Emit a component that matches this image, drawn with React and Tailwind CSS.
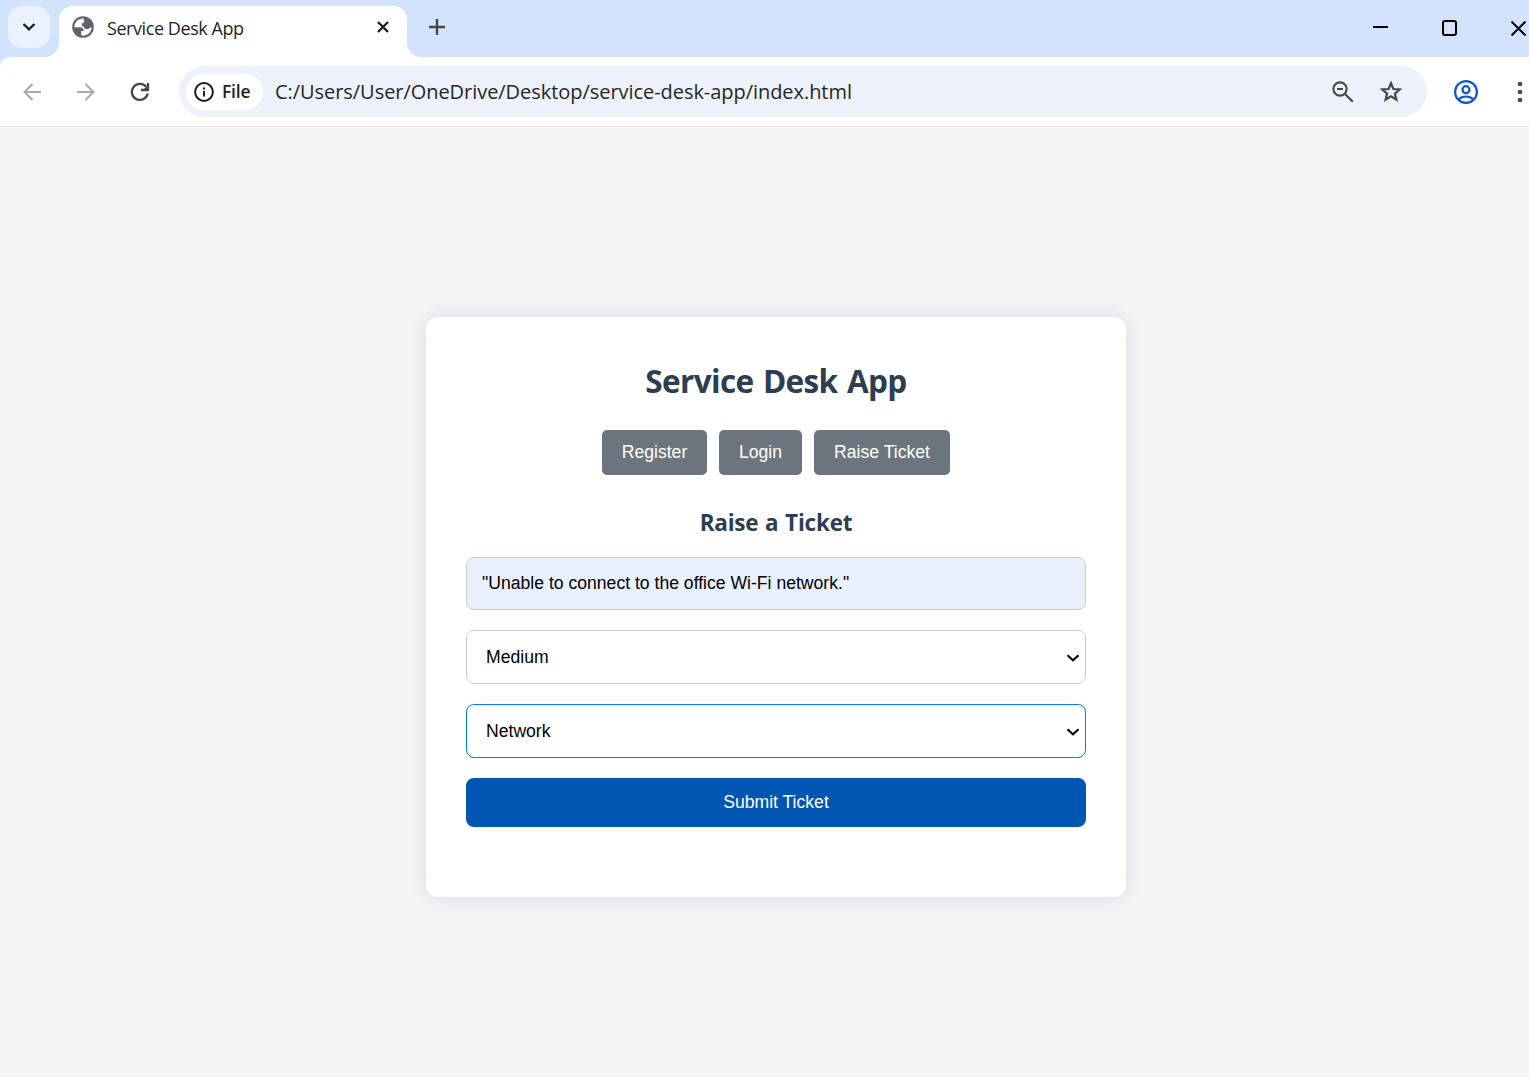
function Glyph({ w, h, children, className = "" }) {
  return (
    <svg width={w} height={h} viewBox={`0 0 ${w} ${h}`} fill="none" className={`shrink-0 ${className}`}>
      {children}
    </svg>
  );
}

function TabStrip() {
  return (
    <div className="flex h-[57px] bg-[#d3e3fd]">
      <button className="ml-2 mt-[6px] flex h-[42px] w-[42px] items-center justify-center rounded-[14px] bg-[#ebf1fe]">
        <Glyph w={14} h={10}>
          <path d="M1.5 2 7 7.3 12.500 2" stroke="#1f1f1f" strokeWidth="2.4" />
        </Glyph>
      </button>
      <Glyph w={14} h={14} className="-ml-[5px] self-end">
        <path d="M14 0V14H0A14 14 0 0 0 14 0Z" fill="#fff" />
      </Glyph>
      <div className="mt-[6px] flex h-[51px] w-[348px] rounded-t-[14px] bg-white pl-[13px] pr-[18px]">
        <Glyph w={22} h={22} className="mt-[10px]">
          <circle cx="11" cy="11" r="10.800" fill="#5f6368" />
          <path d="M11.800 2.600C10 2 6.500 3 4.500 5.200 3 7 2.200 9.500 2.400 11.200H7.600C9.800 11.200 11 12 11.600 13.600L11.800 15H9.200V19.300C14 20.500 19.200 17 19.600 11.400 18.500 11 17.600 12.900 16 12.900H14C12.600 12.900 12 12 12 10.800 10.600 10.800 9.800 10.200 9.800 8.800 9.800 7.200 11 6.600 12.400 6.600 12.400 5 11.200 4.600 11.800 2.600Z" fill="#fff" />
        </Glyph>
        <span className="ml-[13px] mt-2 whitespace-nowrap text-[18px] leading-7 tracking-[-0.430px] text-[#1f1f1f]">Service Desk App</span>
        <Glyph w={12} h={12} className="ml-auto mt-[15px]">
          <path d="M1 1 11 11M11 1 1 11" stroke="#1f1f1f" strokeWidth="2.400" />
        </Glyph>
      </div>
      <Glyph w={14} h={14} className="self-end">
        <path d="M0 0V14H14A14 14 0 0 1 0 0Z" fill="#fff" />
      </Glyph>
      <Glyph w={16} h={16} className="ml-2 mt-[19px]">
        <path d="M8 0V16M0 8H16" stroke="#474747" strokeWidth="2.400" />
      </Glyph>
      <div className="ml-auto flex pr-[3px]">
        <Glyph w={15} h={2} className="mt-[26px]">
          <path d="M0 1H15" stroke="#000" strokeWidth="2" />
        </Glyph>
        <Glyph w={15} h={16} className="ml-[54px] mt-5">
          <rect x="1" y="1" width="13" height="14" rx="2" stroke="#000" strokeWidth="2" />
        </Glyph>
        <Glyph w={15} h={15} className="ml-[54px] mt-[21px]">
          <path d="M.5.5 14.500 14.500M14.500.5.5 14.500" stroke="#000" strokeWidth="2" />
        </Glyph>
      </div>
    </div>
  );
}

function Toolbar() {
  return (
    <div className="border-b border-[#fafafb] bg-[#d3e3fd]">
      <div className="flex h-[70px] items-center rounded-tl-[10px] border-b border-[#dfe0e3] bg-white">
        <Glyph w={18} h={18} className="ml-[23px]">
          <path d="M18 9H1.500M9.500 1 1.500 9 9.500 17" stroke="#a9a9a9" strokeWidth="2" />
        </Glyph>
        <Glyph w={18} h={18} className="ml-9">
          <path d="M0 9H16.500M8.500 1 16.500 9 8.500 17" stroke="#a9a9a9" strokeWidth="2" />
        </Glyph>
        <Glyph w={20} h={20} className="ml-[35px]">
          <path d="M17.700 11.500A8 8 0 1 1 16 4.800" stroke="#474747" strokeWidth="2.300" />
          <path d="M18 1V8H11" stroke="#474747" strokeWidth="2.300" />
          <path d="M18 3V8H13Z" fill="#474747" />
        </Glyph>
        <div className="ml-[29px] flex h-[51px] w-[1248px] items-center rounded-full bg-[#ecf1fa] pl-[7px] pr-[24px]">
          <div className="flex h-9 w-[77px] items-center rounded-full bg-white pl-2">
            <Glyph w={20} h={20}>
              <circle cx="10" cy="10" r="8.900" stroke="#1f1f1f" strokeWidth="2" />
              <path d="M10 9V14.500M10 5.400V7.400" stroke="#1f1f1f" strokeWidth="2" />
            </Glyph>
            <span className="ml-2 text-[17.500px] font-semibold tracking-[-0.2px] text-[#1f1f1f]">File</span>
          </div>
          <span className="ml-3 whitespace-nowrap text-[20px] tracking-[-0.05px] text-[#262626]">C:/Users/User/OneDrive/Desktop/service-desk-app/index.html</span>
          <Glyph w={22} h={22} className="ml-auto">
            <circle cx="8" cy="8" r="6.600" stroke="#474747" strokeWidth="2.100" />
            <path d="M5 8H11M12.800 12.800 20.800 20.800" stroke="#474747" strokeWidth="2.200" />
          </Glyph>
          <Glyph w={24} h={24} className="ml-[25px]">
            <path d="M12 3.300 14.400 9 20.700 9.500 15.900 13.600 17.400 19.700 12 16.400 6.600 19.700 8.100 13.600 3.300 9.500 9.600 9Z" stroke="#474747" strokeWidth="2.200" />
          </Glyph>
        </div>
        <Glyph w={24} h={24} className="ml-[27px]">
          <circle cx="12" cy="12" r="10.900" stroke="#0b57d0" strokeWidth="2.200" />
          <circle cx="12" cy="9.700" r="3.500" stroke="#0b57d0" strokeWidth="2.200" />
          <path d="M4.500 19.500C8.500 15.500 15.500 15.500 19.500 19.500" stroke="#0b57d0" strokeWidth="2.200" />
        </Glyph>
        <Glyph w={6} h={22} className="ml-[39px]">
          <circle cx="3" cy="3" r="2.300" fill="#474747" />
          <circle cx="3" cy="11" r="2.300" fill="#474747" />
          <circle cx="3" cy="19" r="2.300" fill="#474747" />
        </Glyph>
      </div>
    </div>
  );
}

function SelectBox({ value, active }) {
  return (
    <button
      className={`mt-5 flex h-[54px] w-full items-center justify-between rounded-lg border bg-white pl-[19px] pr-[5px] font-['Liberation_Sans',sans-serif] text-[17.600px] text-black ${
        active ? "border-[#007bff]" : "border-[#ccc]"
      }`}
    >
      <span>{value}</span>
      <Glyph w={14} h={8} className="mt-px">
        <path d="M1.500 1.300 7 6.300 12.500 1.300" stroke="#000" strokeWidth="2.100" />
      </Glyph>
    </button>
  );
}

function NavButton({ className, children }) {
  return (
    <button className={`h-[45px] rounded-[5px] bg-[#6c757d] text-center font-['Liberation_Sans',sans-serif] text-[17.600px] text-white ${className}`}>
      {children}
    </button>
  );
}

export default function App() {
  return (
    <div className="flex h-[1077px] w-[1529px] flex-col overflow-hidden bg-[#f2f4f8] font-['Open_Sans','Noto_Sans',sans-serif]">
      <TabStrip />
      <Toolbar />
      <main className="flex flex-1 pl-[426px] pt-[189px]">
        <section className="h-[580px] w-[700px] rounded-xl bg-white px-10 pt-10 text-center shadow-[0_0_20px_rgba(0,0,0,0.1)]">
          <h1 className="h-[47px] whitespace-nowrap text-[31.500px] font-bold leading-[47px] tracking-[-0.650px] text-[#2c3e50] [word-spacing:2px]">Service Desk App</h1>
          <nav className="mt-[26px] flex justify-center gap-3">
            <NavButton className="w-[105px]">Register</NavButton>
            <NavButton className="w-[83px]">Login</NavButton>
            <NavButton className="w-[136px]">Raise Ticket</NavButton>
          </nav>
          <h2 className="mt-[31px] h-[34px] text-[22.500px] font-bold leading-[34px] tracking-[-0.2px] text-[#2c3e50] [word-spacing:1px]">Raise a Ticket</h2>
          <div className="mt-[17px] flex h-[53px] items-center rounded-lg border border-[#ccc] bg-[#e8f0fe] pl-[15px] font-['Liberation_Sans',sans-serif] text-[17.600px] text-black">
            "Unable to connect to the office Wi-Fi network."
          </div>
          <SelectBox value="Medium" />
          <SelectBox value="Network" active />
          <button className="mt-5 block h-[49px] w-full rounded-lg bg-[#0056b3] font-['Liberation_Sans',sans-serif] text-[17.600px] text-white">
            Submit Ticket
          </button>
        </section>
      </main>
    </div>
  );
}
